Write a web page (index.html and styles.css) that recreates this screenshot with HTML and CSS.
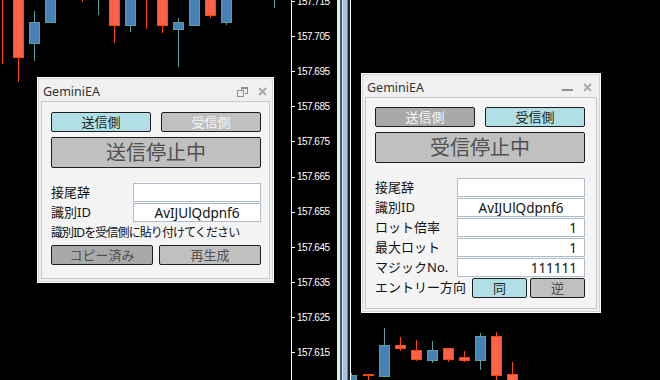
FILE: index.html
```html
<!DOCTYPE html>
<html lang="ja">
  <head>
    <meta charset="UTF-8" />
    <title>GeminiEA</title>
    <meta name="viewport" content="width=device-width, initial-scale=1.0" />
    <link rel="stylesheet" href="styles.css">
  </head>
  <body>
    <div class="terminal">
      <!-- sender chart -->
      <section class="chart chart-left">
        <svg class="chart-canvas" width="336" height="380" viewBox="0 0 336 380" shape-rendering="crispEdges">
          <g class="wick-bear">
            <line x1="2.5" y1="0" x2="2.5" y2="64" />
            <line x1="18.5" y1="0" x2="18.5" y2="82" />
            <line x1="82.5" y1="0" x2="82.5" y2="2" />
            <line x1="114.5" y1="0" x2="114.5" y2="43" />
            <line x1="146.5" y1="0" x2="146.5" y2="29" />
            <line x1="162.5" y1="0" x2="162.5" y2="33" />
            <line x1="210.5" y1="0" x2="210.5" y2="18" />
          </g>
          <g class="wick-bull">
            <line x1="34.5" y1="11" x2="34.5" y2="61" />
            <line x1="98.5" y1="0" x2="98.5" y2="15" />
            <line x1="130.5" y1="0" x2="130.5" y2="32" />
            <line x1="178.5" y1="18" x2="178.5" y2="67" />
            <line x1="226.5" y1="0" x2="226.5" y2="25" />
            <line x1="274.5" y1="0" x2="274.5" y2="8" />
          </g>
          <g class="body-bear">
            <rect x="13.5" y="-5" width="10" height="62" />
            <rect x="109.5" y="-5" width="10" height="30" />
            <rect x="157.5" y="-5" width="10" height="30" />
            <rect x="205.5" y="-5" width="10" height="20" />
          </g>
          <g class="body-bull">
            <rect x="29.5" y="22.5" width="10" height="21" />
            <rect x="45.5" y="-5" width="10" height="27" />
            <rect x="125.5" y="-5" width="10" height="30" />
            <rect x="173.5" y="22.5" width="10" height="7" />
            <rect x="189.5" y="-5" width="10" height="30" />
            <rect x="221.5" y="-5" width="10" height="27" />
          </g>

          <g class="axis">
            <line x1="291.5" y1="0" x2="291.5" y2="380" />
            <line x1="292" y1="1.5" x2="295" y2="1.5" />
            <line x1="292" y1="36.5" x2="295" y2="36.5" />
            <line x1="292" y1="71.5" x2="295" y2="71.5" />
            <line x1="292" y1="106.5" x2="295" y2="106.5" />
            <line x1="292" y1="141.5" x2="295" y2="141.5" />
            <line x1="292" y1="177.5" x2="295" y2="177.5" />
            <line x1="292" y1="212.5" x2="295" y2="212.5" />
            <line x1="292" y1="247.5" x2="295" y2="247.5" />
            <line x1="292" y1="282.5" x2="295" y2="282.5" />
            <line x1="292" y1="317.5" x2="295" y2="317.5" />
            <line x1="292" y1="352.5" x2="295" y2="352.5" />
          </g>
          <g class="price">
            <text x="297" y="4.5" textLength="33">157.715</text>
            <text x="297" y="39.6" textLength="33">157.705</text>
            <text x="297" y="74.8" textLength="33">157.695</text>
            <text x="297" y="109.9" textLength="33">157.685</text>
            <text x="297" y="145" textLength="33">157.675</text>
            <text x="297" y="180.2" textLength="33">157.665</text>
            <text x="297" y="215.4" textLength="33">157.655</text>
            <text x="297" y="250.5" textLength="33">157.645</text>
            <text x="297" y="285.7" textLength="33">157.635</text>
            <text x="297" y="320.8" textLength="33">157.625</text>
            <text x="297" y="356" textLength="33">157.615</text>
          </g>
        </svg>

        <div class="ea-window ea-sender">
          <div class="ea-title">
            <span class="ea-name">GeminiEA</span>
            <span class="ea-ctrl">
              <svg width="11" height="10" viewBox="0 0 11 10" shape-rendering="crispEdges">
                <path d="M4.5 3V0.5H10.5V6.5H7.5" fill="none" stroke="#8e8e8e" />
                <line x1="5" y1="1.5" x2="10" y2="1.5" stroke="#8e8e8e" />
                <rect x="0.5" y="3.5" width="6" height="6" fill="none" stroke="#8e8e8e" />
              </svg>
              <svg width="9" height="9" viewBox="0 0 9 9">
                <path d="M1 1L8 8M8 1L1 8" stroke="#a9a9a9" stroke-width="2" />
              </svg>
            </span>
          </div>
          <div class="ea-body">
            <div class="ea-pair">
              <button class="ea-btn on">送信側</button>
              <button class="ea-btn off">受信側</button>
            </div>
            <button class="ea-status">送信停止中</button>
            <div class="ea-form">
              <div class="ea-row">
                <label>接尾辞</label>
                <input type="text" value="" readonly />
              </div>
              <div class="ea-row">
                <label>識別ID</label>
                <input type="text" class="mid" value="AvIJUlQdpnf6" readonly />
              </div>
            </div>
            <p class="ea-note">識別IDを受信側に貼り付けてください</p>
            <div class="ea-actions">
              <button class="ea-btn dim">コピー済み</button>
              <button class="ea-btn">再生成</button>
            </div>
          </div>
        </div>
      </section>

      <div class="splitter"></div>

      <!-- receiver chart -->
      <section class="chart chart-right">
        <svg class="chart-canvas" width="309" height="380" viewBox="351 0 309 380" shape-rendering="crispEdges">
          <g class="wick-bull">
            <line x1="351.5" y1="373" x2="351.5" y2="380" />
            <line x1="384.5" y1="328" x2="384.5" y2="377" />
            <line x1="432.5" y1="341" x2="432.5" y2="363" />
            <line x1="480.5" y1="333" x2="480.5" y2="370" />
          </g>
          <g class="wick-bear">
            <line x1="368.5" y1="374" x2="368.5" y2="380" />
            <line x1="400.5" y1="337" x2="400.5" y2="351" />
            <line x1="416.5" y1="340" x2="416.5" y2="361" />
            <line x1="448.5" y1="348" x2="448.5" y2="362" />
            <line x1="464.5" y1="351" x2="464.5" y2="362" />
            <line x1="496.5" y1="332" x2="496.5" y2="380" />
            <line x1="512.5" y1="362" x2="512.5" y2="380" />
          </g>
          <g class="body-bull">
            <rect x="346.5" y="375.5" width="10" height="10" />
            <rect x="379.5" y="345.5" width="10" height="31" />
            <rect x="427.5" y="350.5" width="10" height="10" />
            <rect x="475.5" y="336.5" width="10" height="24" />
          </g>
          <g class="body-bear">
            <rect x="363.5" y="374.5" width="10" height="1" />
            <rect x="395.5" y="345.5" width="10" height="3" />
            <rect x="411.5" y="350.5" width="10" height="9" />
            <rect x="443.5" y="348.5" width="10" height="11" />
            <rect x="459.5" y="357.5" width="10" height="3" />
            <rect x="491.5" y="336.5" width="10" height="39" />
            <rect x="507.5" y="374.5" width="10" height="10" />
          </g>
        </svg>

        <div class="ea-window ea-receiver">
          <div class="ea-title">
            <span class="ea-name">GeminiEA</span>
            <span class="ea-ctrl">
              <svg width="11" height="10" viewBox="0 0 11 10">
                <rect x="0" y="6" width="11" height="2" fill="#8e8e8e" />
              </svg>
              <svg width="9" height="9" viewBox="0 0 9 9">
                <path d="M1 1L8 8M8 1L1 8" stroke="#a9a9a9" stroke-width="2" />
              </svg>
            </span>
          </div>
          <div class="ea-body">
            <div class="ea-pair">
              <button class="ea-btn dim off">送信側</button>
              <button class="ea-btn on">受信側</button>
            </div>
            <button class="ea-status">受信停止中</button>
            <div class="ea-form">
              <div class="ea-row">
                <label>接尾辞</label>
                <input type="text" value="" readonly />
              </div>
              <div class="ea-row">
                <label>識別ID</label>
                <input type="text" class="mid" value="AvIJUlQdpnf6" readonly />
              </div>
              <div class="ea-row">
                <label>ロット倍率</label>
                <input type="text" class="num" value="1" readonly />
              </div>
              <div class="ea-row">
                <label>最大ロット</label>
                <input type="text" class="num" value="1" readonly />
              </div>
              <div class="ea-row">
                <label>マジックNo.</label>
                <input type="text" class="num" value="111111" readonly />
              </div>
              <div class="ea-row">
                <label>エントリー方向</label>
                <div class="ea-dir">
                  <button class="ea-btn on">同</button>
                  <button class="ea-btn">逆</button>
                </div>
              </div>
            </div>
          </div>
        </div>
      </section>
    </div>
  </body>
</html>
```

FILE: styles.css
```css
* {
  box-sizing: border-box;
}
html,
body {
  margin: 0;
  height: 100%;
}
body {
  background: #000;
  font-family: "Noto Sans", "Noto Sans CJK JP", sans-serif;
  overflow: hidden;
}

.terminal {
  display: flex;
  width: 660px;
  height: 380px;
}
.chart {
  position: relative;
  height: 380px;
  overflow: hidden;
}
.chart-left {
  width: 336px;
  flex: none;
}
.chart-right {
  flex: 1;
  border-left: 1px solid #fff;
}
.chart-canvas {
  display: block;
  position: absolute;
  top: 0;
  left: 0;
}
.splitter {
  width: 14px;
  flex: none;
  background: linear-gradient(
    to right,
    #000 0 1px,
    #dfe7ef 1px 4px,
    #525c68 4px 6px,
    #cbdbec 6px 7px,
    #a7c1de 7px 11px,
    #72849a 11px 12px,
    #1c232c 12px 14px
  );
}

/* candles */
.wick-bear line {
  stroke: #ff4500;
}
.wick-bull line {
  stroke: #5f9ea0;
}
.body-bear rect {
  fill: #ff6347;
  stroke: #ff4500;
}
.body-bull rect {
  fill: #4682b4;
  stroke: #5f9ea0;
}
.axis line {
  stroke: #fff;
}
.price text {
  fill: #fff;
  font-family: "Liberation Sans", sans-serif;
  font-size: 10px;
}

/* EA panel */
.ea-window {
  position: absolute;
  display: flex;
  flex-direction: column;
  background: #f0f0f0;
  border: 1px solid #fff;
  box-shadow: inset 0 0 0 1px #d2d2d2;
}
.ea-sender {
  left: 37px;
  top: 77px;
  width: 237px;
  height: 206px;
}
.ea-receiver {
  left: 10px;
  top: 73px;
  width: 240px;
  height: 240px;
}
.ea-title {
  height: 23px;
  padding: 4px 6px 0 5px;
  display: flex;
  align-items: center;
  justify-content: space-between;
  font-size: 12.5px;
  color: #333;
}
.ea-receiver .ea-title {
  padding-right: 8px;
}
.ea-ctrl {
  display: flex;
  align-items: center;
  gap: 10px;
}
.ea-ctrl svg {
  display: block;
}
.ea-body {
  flex: 1;
  margin: 0 3px 3px;
  border: 1px solid #c8c8c8;
  background: #f4f4f4;
  padding: 10px 0 0 9px;
}
.ea-receiver .ea-body {
  padding-top: 9px;
}

.ea-btn,
.ea-status {
  font-family: inherit;
  padding: 0;
  border: 1px solid #1e1e1e;
  border-radius: 2px;
  background: #c0c0c0;
  color: #505050;
}
.ea-btn {
  flex: 1;
  height: 20px;
  font-size: 13px;
  line-height: 18px;
}
.ea-btn.on {
  background: #b0e0e6;
  color: #222;
}
.ea-btn.dim {
  background: #a9a9a9;
}
.ea-btn.off {
  color: #f6f6f6;
}
.ea-pair {
  display: flex;
  gap: 10px;
  width: 210px;
}
.ea-status {
  display: block;
  width: 210px;
  height: 31px;
  margin-top: 5px;
  font-size: 20px;
  line-height: 29px;
}

.ea-form {
  margin-top: 15px;
  width: 210px;
}
.ea-row {
  display: flex;
  align-items: flex-start;
  height: 20px;
}
.ea-row label {
  flex: 1;
  font-size: 13px;
  line-height: 19px;
  color: #111;
  white-space: nowrap;
}
.ea-row input {
  width: 128px;
  height: 19px;
  padding: 0 7px;
  border: 1px solid #aebccb;
  background: #fff;
  font-family: inherit;
  font-size: 13.5px;
  color: #111;
  outline: none;
}
.ea-row input.mid {
  text-align: center;
}
.ea-row input.num {
  text-align: right;
}
.ea-dir {
  display: flex;
  gap: 3px;
  width: 113px;
}

.ea-note {
  margin: 0;
  height: 20px;
  font-size: 12px;
  line-height: 20px;
  letter-spacing: -0.9px;
  color: #111;
  white-space: nowrap;
}
.ea-actions {
  display: flex;
  gap: 6px;
  width: 210px;
  margin-top: 2px;
}
```
